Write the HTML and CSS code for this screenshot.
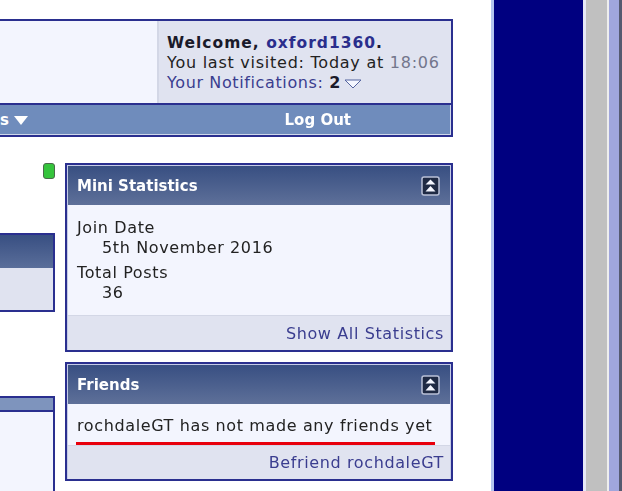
FILE: index.html
```html
<!DOCTYPE html>
<html lang="en">
<head>
<meta charset="utf-8">
<title>Profile</title>
<link rel="stylesheet" href="styles.css">
</head>
<body>
<div class="page">
  <main class="content">
    <header class="head">
      <div class="head-top">
        <div class="head-blank"></div>
        <div class="welcome">
          <div class="welcome-name">Welcome, <a class="name-link">oxford1360</a>.</div>
          <div class="visited">You last visited: Today at <span class="time">18:06</span></div>
          <div class="notif"><a class="link">Your Notifications:</a> <b class="count">2</b>
            <svg class="tri" width="18" height="10" viewBox="0 0 18 10"><path d="M1 1h16L9 9z" fill="#f5f7ff" stroke="#55649f"/></svg>
          </div>
        </div>
      </div>
      <nav class="navbar">
        <span class="nav-item">s
          <svg width="14" height="10" viewBox="0 0 14 10"><path d="M0 1h14L7 10z" fill="#fff"/></svg>
        </span>
        <span class="nav-logout">Log Out</span>
      </nav>
    </header>
    <div class="columns">
      <section class="left">
        <div class="status-row"><span class="status"></span></div>
        <div class="box box-small">
          <div class="small-head"></div>
          <div class="small-body"></div>
        </div>
        <div class="box box-large">
          <div class="large-head"></div>
          <div class="large-body"></div>
        </div>
      </section>
      <aside class="right">
        <div class="panel">
          <div class="panel-head">
            <span class="panel-title">Mini Statistics</span>
            <svg class="collapse" width="19" height="20" viewBox="0 0 19 20"><rect x="1" y="1" width="17" height="18" rx="2" fill="#1f2a44" stroke="#b9c0d6" stroke-width="1.500"/><path d="M9.500 3.500l5 5h-10zM9.500 10l5 5.500h-10z" fill="#f4f6ff"/></svg>
          </div>
          <div class="panel-body stats">
            <div>Join Date</div>
            <div class="stat-value">5th November 2016</div>
            <div class="stat-label">Total Posts</div>
            <div class="stat-value">36</div>
          </div>
          <div class="panel-foot"><a class="link">Show All Statistics</a></div>
        </div>
        <div class="panel">
          <div class="panel-head">
            <span class="panel-title">Friends</span>
            <svg class="collapse" width="19" height="20" viewBox="0 0 19 20"><rect x="1" y="1" width="17" height="18" rx="2" fill="#1f2a44" stroke="#b9c0d6" stroke-width="1.500"/><path d="M9.500 3.500l5 5h-10zM9.500 10l5 5.500h-10z" fill="#f4f6ff"/></svg>
          </div>
          <div class="panel-body friends"><span class="friends-text">rochdaleGT has not made any friends yet</span></div>
          <div class="redline"></div>
          <div class="panel-foot friends-foot"><a class="link">Befriend rochdaleGT</a></div>
        </div>
        <div class="panel panel-next"></div>
      </aside>
    </div>
  </main>
  <div class="strip">
    <div class="strip-edge"></div>
    <div class="strip-navy"></div>
    <div class="strip-light"></div>
    <div class="strip-grey"></div>
    <div class="strip-light2"></div>
    <div class="strip-lav"></div>
    <div class="strip-dark"></div>
  </div>
</div>
</body>
</html>
```
FILE: styles.css
```css
html, body {
  margin: 0;
  height: 100%;
  overflow: hidden;
  background: #fff;
}
.page {
  display: flex;
  height: 491px;
  width: 622px;
  overflow: hidden;
  font-family: "DejaVu Sans", sans-serif;
  font-size: 16px;
  letter-spacing: .62px;
  line-height: 20px;
  color: #222;
  filter: blur(.4px);
}
.content {
  width: 453px;
  padding: 19px 38px 0 0;
  flex: none;
}
.head {
  border: 2px solid #2a2f8f;
  border-left: 0;
  background: #f3f5fe;
}
.head-top {
  display: flex;
  height: 82px;
}
.head-blank { flex: 1; }
.welcome {
  width: 294px;
  box-sizing: border-box;
  padding: 12px 0 0 8px;
  background: #e0e3f0;
  border-left: 2px solid #d3d7e6;
  white-space: nowrap;
}
.welcome-name {
  font-size: 15.500px;
  font-weight: 700;
  color: #1a1a2a;
  letter-spacing: 1px;
}
.visited { letter-spacing: .75px; }
.name-link { color: #2a2e8c; }
.time { color: #73768c; }
.link { color: #3a3d8f; }
.count { color: #1a1a2a; }
.tri { vertical-align: -1px; margin-left: -3px; }
.navbar {
  display: flex;
  justify-content: space-between;
  align-items: center;
  height: 32px;
  border-top: 2px solid #2a2f8f;
  box-sizing: border-box;
  background: #6f8cbc;
  box-shadow: inset -1px -1px 0 #cfd8ea;
  color: #fff;
  font-weight: 700;
  font-size: 15px;
  letter-spacing: 0;
}
.nav-item {
  display: flex;
  align-items: center;
  gap: 5px;
}
.nav-logout { margin-right: 100px; }
.columns {
  display: flex;
  gap: 10px;
  margin-top: 25px;
}
.left {
  flex: 1;
  min-width: 0;
}
.status-row {
  display: flex;
  justify-content: flex-end;
  align-items: flex-start;
  box-sizing: border-box;
  padding-top: 1px;
  height: 71px;
}
.status {
  width: 12px;
  height: 16px;
  box-sizing: border-box;
  border: 1px solid #4a6a4a;
  border-radius: 3px;
  background: #35c43c;
}
.box {
  border: 2px solid #2a2f8f;
  border-left: 0;
}
.box-small { height: 79px; box-sizing: border-box; }
.small-head {
  height: 33px;
  background: linear-gradient(#384f82, #5a6e9a);
}
.small-body {
  height: 42px;
  background: #e0e3f0;
}
.box-large {
  margin-top: 84px;
  background: #f3f5fe;
  border-bottom: 0;
}
.large-head {
  height: 12px;
  background: #7e94bd;
  border-bottom: 2px solid #2a2f8f;
}
.large-body { height: 90px; }
.right {
  width: 388px;
  flex: none;
  margin-top: 1px;
  display: flex;
  flex-direction: column;
  gap: 10px;
}
.panel {
  border: 2px solid #2a2f8f;
  box-shadow: inset 0 0 0 1px #c4cbe6;
  background: #f3f5fe;
}
.panel-head {
  display: flex;
  justify-content: space-between;
  align-items: center;
  height: 39px;
  margin: 1px 1px 0;
  padding: 0 10px 0 9px;
  background: linear-gradient(#384f82, #5e7099);
  color: #fff;
  font-weight: 700;
  font-size: 15px;
  letter-spacing: 0;
}
.collapse { display: block; }
.panel-body {
  padding: 0 9px;
  margin: 0 1px;
}
.stats {
  padding-top: 13px;
  height: 97px;
}
.stat-value { padding-left: 25px; }
.stat-label { margin-top: 5px; }
.panel-foot {
  margin: 0 1px;
  height: 35px;
  line-height: 35px;
  box-sizing: border-box;
  background: #e0e3f0;
  border-top: 1px solid #d3d7e6;
  text-align: right;
  padding-right: 6px;
  white-space: nowrap;
}
.friends {
  padding-top: 12px;
  height: 24px;
  white-space: nowrap;
}
.redline {
  height: 3px;
  margin: 2px 16px 0 9px;
  background: #e8000c;
}
.friends-foot {
  height: 34px;
  line-height: 34px;
}
.panel-next {
  height: 40px;
  border-color: #5a66b0;
  border-bottom: 0;
}
.strip {
  display: flex;
  width: 131px;
  flex: none;
}
.strip-edge { width: 3px; background: #b4c4ee; }
.strip-navy { width: 89px; background: #000080; }
.strip-light { width: 3px; background: #e6e8f6; }
.strip-grey { width: 21px; background: #c0c0c0; }
.strip-light2 { width: 2px; background: #eeeeee; }
.strip-lav { width: 10px; background: #a0a6dc; }
.strip-dark { width: 3px; background: #555a70; }
```
